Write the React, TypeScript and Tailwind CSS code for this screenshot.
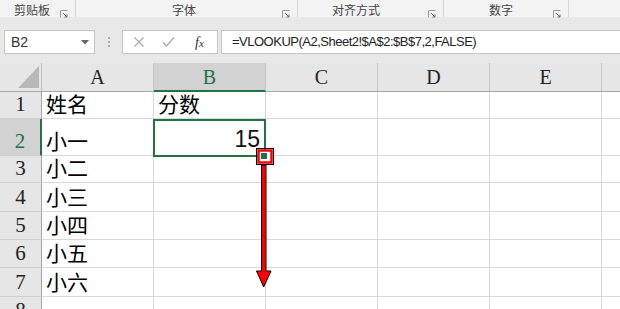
import React from "react";

const serif = { fontFamily: '"Liberation Serif", "Noto Sans CJK SC", serif' };
const cjk = { fontFamily: '"Liberation Serif", "Noto Sans CJK SC", serif' };
const ui = { fontFamily: '"Liberation Sans", "Noto Sans CJK SC", sans-serif' };

const COLS = ["A", "B", "C", "D", "E", "F"];
const ROWS: { n: number; h: string; a?: string; b?: string }[] = [
  { n: 1, h: "h-[27px]", a: "姓名", b: "分数" },
  { n: 2, h: "h-[37px]", a: "小一" },
  { n: 3, h: "h-[27px]", a: "小二" },
  { n: 4, h: "h-[29px]", a: "小三" },
  { n: 5, h: "h-[28px]", a: "小四" },
  { n: 6, h: "h-[28px]", a: "小五" },
  { n: 7, h: "h-[29px]", a: "小六" },
  { n: 8, h: "h-[28px]" },
];

function Launcher() {
  return (
    <svg width="8" height="8" viewBox="0 0 8 8" className="absolute right-[7px] top-[10px]">
      <path d="M0.5 7.5V0.5H7.5" fill="none" stroke="#9a9a9a" strokeWidth="1" />
      <path d="M3 3L7 7M7 4.5V7H4.5" fill="none" stroke="#666" strokeWidth="1" />
    </svg>
  );
}

function RibbonGroup({ label, width, pad }: { label: string; width: string; pad: string }) {
  return (
    <div className={`relative ${width} h-full border-r border-[#d6d6d6] flex ${pad} pt-[4px]`}>
      <span className="text-[12px] leading-[14px] text-[#444]" style={ui}>
        {label}
      </span>
      <Launcher />
    </div>
  );
}

function FormulaBar() {
  return (
    <div className="bg-[#e8e8e8] pt-[13px] pb-[9px] flex h-[46px]">
      <div className="ml-[4px] w-[91px] bg-white border border-[#c6c6c6] flex items-center justify-between pl-[6px] pr-[5px]">
        <span className="text-[14px] text-[#333]" style={ui}>B2</span>
        <svg width="8" height="5" viewBox="0 0 8 5">
          <path d="M0 0H8L4 4.5Z" fill="#666" />
        </svg>
      </div>
      <div className="w-[27px] flex items-center justify-center">
        <div className="flex flex-col gap-[2px]">
          <span className="w-[2px] h-[2px] bg-[#b0b0b0]" />
          <span className="w-[2px] h-[2px] bg-[#b0b0b0]" />
          <span className="w-[2px] h-[2px] bg-[#b0b0b0]" />
        </div>
      </div>
      <div className="w-[96px] bg-white border border-[#c6c6c6] flex items-center">
        <svg width="12" height="12" viewBox="0 0 12 12" className="ml-[10px]">
          <path d="M1.5 1.5L10.5 10.5M10.5 1.5L1.5 10.5" stroke="#a8a8a8" strokeWidth="1.2" />
        </svg>
        <svg width="13" height="12" viewBox="0 0 13 12" className="ml-[17px]">
          <path d="M1 6.5L4.5 10L12 1.5" fill="none" stroke="#a8a8a8" strokeWidth="1.3" />
        </svg>
        <span className="ml-[20px] text-[14px] italic text-[#333]" style={serif}>
          f<span className="text-[11px]">x</span>
        </span>
      </div>
      <div className="ml-[3px] flex-1 bg-white border-y border-l border-[#c6c6c6] flex items-center pl-[10px]">
        <span className="text-[13px] text-[#222] tracking-[-0.5px]" style={ui}>
          =VLOOKUP(A2,Sheet2!$A$2:$B$7,2,FALSE)
        </span>
      </div>
    </div>
  );
}

function HeaderRow() {
  return (
    <div className="flex h-[29px] bg-[#e6e6e6] border-b border-[#a6a6a6]">
      <div className="w-[42px] shrink-0 relative border-r border-[#c0c0c0]">
        <svg width="42" height="28" viewBox="0 0 42 28" className="absolute inset-0">
          <path d="M18 25H39V3Z" fill="#b8b8b8" />
        </svg>
      </div>
      {COLS.map((c) => (
        <div
          key={c}
          className={`w-[112px] shrink-0 flex items-center justify-center border-r border-[#c6c6c6] text-[20px] ${
            c === "B" ? "bg-[#d2d2d2] text-[#217346] border-b-2 border-b-[#217346] -mb-px" : "text-[#222]"
          }`}
          style={serif}
        >
          {c === "F" ? "" : c}
        </div>
      ))}
    </div>
  );
}

function SheetRow({ row }: { row: (typeof ROWS)[number] }) {
  const sel = row.n === 2;
  return (
    <div className={`flex ${row.h} shrink-0`}>
      <div
        className={`w-[42px] shrink-0 flex items-end justify-center pb-[1px] border-b border-[#d0d0d0] text-[21px] leading-[26px] ${
          sel
            ? "bg-[#d2d2d2] text-[#217346] border-r-2 border-r-[#217346]"
            : "bg-[#e6e6e6] text-[#222] border-r border-r-[#a6a6a6]"
        }`}
        style={serif}
      >
        {row.n}
      </div>
      {COLS.map((c) => (
        <div
          key={c}
          className="w-[112px] shrink-0 border-r border-b border-[#d9d9d9] bg-white flex items-end px-[4px] pb-[1px]"
        >
          {c === "A" && row.a && (
            <span className="text-[21px] leading-[24px] text-black" style={cjk}>
              {row.a}
            </span>
          )}
          {c === "B" && row.b && (
            <span className="text-[21px] leading-[24px] text-black" style={cjk}>
              {row.b}
            </span>
          )}
          {c === "B" && sel && (
            <span className="ml-auto text-[23px] leading-[30px] text-[#111] pr-[1px]" style={ui}>
              15
            </span>
          )}
        </div>
      ))}
    </div>
  );
}

export default function App() {
  return (
    <div className="relative w-[620px] h-[309px] overflow-hidden bg-white">
      <div className="h-[17px] bg-[#f3f3f3] flex">
        <RibbonGroup label="剪贴板" width="w-[76px]" pad="pl-[14px]" />
        <RibbonGroup label="字体" width="w-[222px]" pad="pl-[96px]" />
        <RibbonGroup label="对齐方式" width="w-[146px]" pad="pl-[34px]" />
        <RibbonGroup label="数字" width="w-[125px]" pad="pl-[45px]" />
      </div>
      <FormulaBar />
      <HeaderRow />
      <div className="flex flex-col">
        {ROWS.map((r) => (
          <SheetRow key={r.n} row={r} />
        ))}
      </div>

      {/* selection + fill handle drag annotation */}
      <div className="absolute left-[153px] top-[119px] w-[113px] h-[38px] border-2 border-[#217346] pointer-events-none" />
      <svg className="absolute inset-0 pointer-events-none" width="620" height="309" viewBox="0 0 620 309">
        <rect x="256.5" y="148.5" width="17" height="16" fill="none" stroke="#000" strokeWidth="1" />
        <rect x="258.5" y="150.5" width="13" height="12" fill="#fff" stroke="#ff0000" strokeWidth="2.5" />
        <rect x="261" y="153" width="6" height="6" fill="#217346" />
        <path
          d="M261.5 165H266V271H271L263.7 287L256.5 271H261.5Z"
          fill="#ff0000"
          stroke="#000"
          strokeWidth="1"
          strokeLinejoin="round"
        />
      </svg>
    </div>
  );
}
